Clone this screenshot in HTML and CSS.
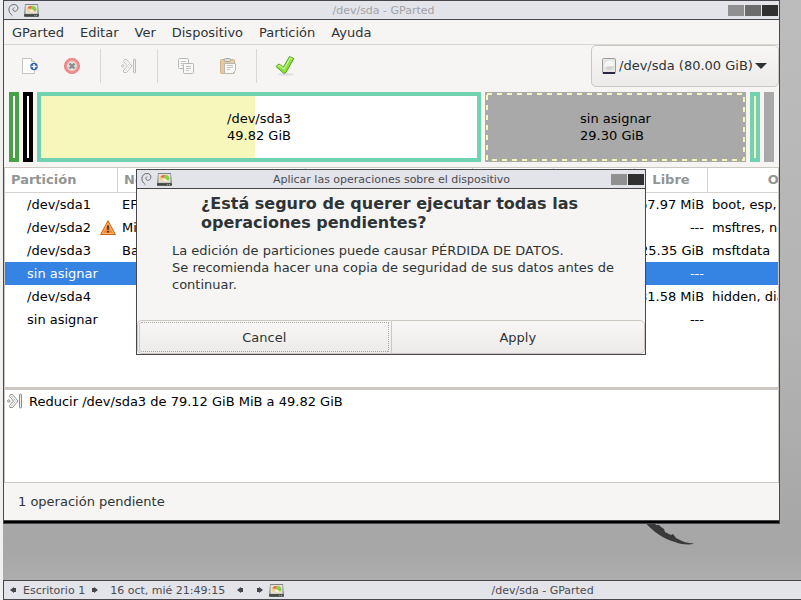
FILE: index.html
```html
<!DOCTYPE html>
<html lang="es">
<head>
<meta charset="utf-8">
<title>/dev/sda - GParted</title>
<link rel="stylesheet" href="styles.css">
</head>
<body>
<svg class="defs" aria-hidden="true">
  <defs>
    <symbol id="swirl" viewBox="0 0 12 14">
      <path d="M4.500 13C2 11 .8 8.500 1 6C1.300 3 3.500 1 6.500 1C9.500 1 11 3 10.800 5C10.600 7.500 8.500 8.800 6.800 8.300C5 7.700 4.800 5.500 6.300 4.500" fill="none" stroke="#606266" stroke-width="1" stroke-linecap="round"/>
    </symbol>
    <symbol id="gparted" viewBox="0 0 16 14">
      <path d="M1 0H15L16 13L15 14H1L0 13Z" fill="#7c7f79"/>
      <rect x="1.500" y="1" width="13" height="9.500" fill="#e2e3de"/>
      <ellipse cx="8" cy="5.800" rx="5.300" ry="3.500" fill="#f3d291"/>
      <path d="M7.500 5.500L3.500 4.500C4.500 2.500 6.500 2 8.500 2.300Z" fill="#ee6b43"/>
      <path d="M7.500 5.500L8.500 2.300C12 2 13.500 4 13.300 6.500L12 8Z" fill="#84cf45"/>
      <path d="M6 6.500L9 5.800L11 8.500L7 9Z" fill="#f8efe4"/>
      <rect x="0" y="11" width="16" height="2.500" fill="#444742"/>
      <rect x="11" y="12" width="1" height="1" fill="#b5c9a8"/>
      <rect x="13" y="12" width="1" height="1" fill="#ccd0c8"/>
    </symbol>
    <symbol id="resize" viewBox="0 0 16 16">
      <path d="M3.500 1.500H5.500L11 8L5.500 14.500H3L2.500 12.500L6.500 8L2.500 3.500Z" fill="#fff" stroke="currentColor"/>
      <path d="M4.500 3L8.700 8L4.500 13" fill="none" stroke="currentColor" stroke-dasharray="1 1"/>
      <circle cx="1.800" cy="8" r="1.200" fill="#fff" stroke="currentColor"/>
      <rect x="12.500" y="1" width="2" height="14" rx="1" fill="#eee" stroke="currentColor"/>
    </symbol>
  </defs>
</svg>

<main class="desktop">
  <svg class="wallpaper-stroke" viewBox="0 0 52 26" aria-hidden="true">
    <path d="M0 0H9L12 4L15 4L17 6L20 8L21 11L27 14L29 13L32 17L38 20C42 22 46 22 50 22.500C46 24 39 24 31 21C20 18 9 11 0 0Z" fill="#393939"/>
  </svg>

  <section class="window" aria-label="GParted">
    <header class="titlebar inactive">
      <svg class="swirl"><use href="#swirl"/></svg>
      <svg class="app-icon"><use href="#gparted"/></svg>
      <span class="title">/dev/sda - GParted</span>
      <button class="win-btn light" aria-label="Minimizar"></button>
      <button class="win-btn mid" aria-label="Maximizar"></button>
      <button class="win-btn dark" aria-label="Cerrar"></button>
    </header>

    <nav class="menubar">
      <button>GParted</button>
      <button>Editar</button>
      <button>Ver</button>
      <button>Dispositivo</button>
      <button>Partición</button>
      <button>Ayuda</button>
    </nav>

    <div class="toolbar">
      <button class="tool" aria-label="Nueva">
        <svg class="icon" viewBox="0 0 16 16">
          <path d="M.5 .5H9.500L12.500 3.500V15.500H.5Z" fill="#fdfdfd" stroke="#c4c4c2"/>
          <path d="M9.500 .5V3.500H12.500" fill="#eee" stroke="#c4c4c2"/>
          <circle cx="12" cy="8.500" r="3.700" fill="#2e5fa5"/>
          <path d="M12 6V11M9.500 8.500H14.500" stroke="#fff" stroke-width="1.500"/>
        </svg>
      </button>
      <button class="tool" aria-label="Borrar">
        <svg class="icon" viewBox="0 0 16 16">
          <circle cx="8" cy="8" r="6.400" fill="#e2e1e0" stroke="#ef8f8f" stroke-width="3"/>
          <circle cx="8" cy="8" r="7.600" fill="none" stroke="#e87f7f" stroke-width=".7"/>
          <path d="M5.500 5.500L10.500 10.500M10.500 5.500L5.500 10.500" stroke="#8b8d8c" stroke-width="2.400"/>
        </svg>
      </button>
      <span class="sep"></span>
      <button class="tool faded" aria-label="Redimensionar/Mover">
        <svg class="icon"><use href="#resize"/></svg>
      </button>
      <span class="sep"></span>
      <button class="tool" aria-label="Copiar">
        <svg class="icon" viewBox="0 0 16 16">
          <rect x=".5" y=".5" width="10" height="10" rx="1" fill="#f8f8f7" stroke="#b7b8b6"/>
          <path d="M3 3.500H8M3 5.500H8M3 7.500H6" stroke="#c4c5c3"/>
          <rect x="5.500" y="5.500" width="10" height="10" rx="1" fill="#f8f8f7" stroke="#b7b8b6"/>
          <path d="M8 8.500H13M8 10.500H13M8 12.500H11" stroke="#c4c5c3"/>
        </svg>
      </button>
      <button class="tool" aria-label="Pegar">
        <svg class="icon" viewBox="0 0 16 16">
          <rect x=".5" y="1.500" width="14" height="14" rx="1" fill="#e5c9a0" stroke="#d0b386"/>
          <rect x="4.500" y=".5" width="6" height="3" rx="1" fill="#dededc" stroke="#a8a9a7"/>
          <path d="M4.500 5.500H15.500V12.500L12.500 15.500H4.500Z" fill="#f8f8f7" stroke="#b7b8b6"/>
          <path d="M7 7.500H13M7 9.500H13M7 11.500H10" stroke="#c4c5c3"/>
        </svg>
      </button>
      <span class="sep"></span>
      <button class="tool" aria-label="Aplicar">
        <svg class="icon large" viewBox="0 0 24 24">
          <ellipse cx="13" cy="20.500" rx="8" ry="1.400" fill="#e2e1df"/>
          <path d="M3 12.500L6 10L10.500 13L16.500 2.500L20.800 4.500L13 18.500L11 19.500Z" fill="#8ae234" stroke="#5a9e26" stroke-linejoin="round"/>
          <path d="M5 12.500L6.500 11.500L11 15L17.200 4L19.200 5" fill="none" stroke="#c9f59d" stroke-width="1.200"/>
        </svg>
      </button>
      <div class="device">
        <svg class="disk" viewBox="0 0 14 16" aria-hidden="true">
          <rect x=".5" y=".5" width="13" height="15" rx="1" fill="#e6e6e3" stroke="#9b9d99"/>
          <ellipse cx="7" cy="7" rx="5" ry="5" fill="#d3d4d0"/>
          <path d="M2 7C3 2 9 1 12 4V8C9 9 6 7 3 10Z" fill="#f6f6f4"/>
          <rect x="1" y="14" width="12" height="2" fill="#25283f"/>
        </svg>
        <select aria-label="Dispositivo"><option>/dev/sda (80.00 GiB)</option></select>
        <svg class="arrow" viewBox="0 0 12 6" aria-hidden="true"><path d="M0 0H12L6 6Z" fill="#2e3436"/></svg>
      </div>
    </div>

    <div class="map">
      <div class="part tiny green"></div>
      <div class="part tiny black"></div>
      <div class="part main-part"><p>/dev/sda3<br>49.82 GiB</p></div>
      <div class="part free">
        <svg class="dashes" aria-hidden="true"><rect x="2" y="2"/></svg>
        <p>sin asignar<br>29.30 GiB</p>
      </div>
      <div class="part tiny teal"></div>
      <div class="part tiny grey"></div>
    </div>

    <div class="list">
      <table>
        <colgroup><col class="c-part"><col class="c-name"><col class="c-fs"><col class="c-size"><col class="c-size"><col class="c-free"><col class="c-flags"></colgroup>
        <thead>
          <tr><th class="left">Partición</th><th class="left">Nombre</th><th></th><th></th><th></th><th>Libre</th><th>Opciones</th></tr>
        </thead>
        <tbody>
          <tr><td>/dev/sda1</td><td>EFI</td><td></td><td></td><td></td><td class="num">67.97 MiB</td><td>boot, esp, hidden</td></tr>
          <tr><td><span class="warned">/dev/sda2
            <svg class="warn" viewBox="0 0 16 16" role="img" aria-label="Aviso">
              <path d="M8 .8L15.400 14.500H.6Z" fill="#f58a2b" stroke="#ce6412" stroke-linejoin="round"/>
              <path d="M8 3L13.600 13.500H2.400Z" fill="none" stroke="#fcb677"/>
              <path d="M7 5.500H9L8.700 10H7.300Z" fill="#353535"/><rect x="7" y="11" width="2" height="1.500" fill="#353535"/>
            </svg></span></td><td>Mic</td><td></td><td></td><td></td><td class="num">---</td><td>msftres, no_automount</td></tr>
          <tr><td>/dev/sda3</td><td>Bas</td><td></td><td></td><td></td><td class="num">25.35 GiB</td><td>msftdata</td></tr>
          <tr class="selected"><td>sin asignar</td><td></td><td></td><td></td><td></td><td class="num">---</td><td></td></tr>
          <tr><td>/dev/sda4</td><td></td><td></td><td></td><td></td><td class="num">81.58 MiB</td><td>hidden, diag</td></tr>
          <tr><td>sin asignar</td><td></td><td></td><td></td><td></td><td class="num">---</td><td></td></tr>
        </tbody>
      </table>
    </div>

    <div class="operations">
      <svg class="icon op-icon" aria-hidden="true"><use href="#resize"/></svg>
      <span>Reducir /dev/sda3 de 79.12 GiB MiB a 49.82 GiB</span>
    </div>

    <footer class="status">1 operación pendiente</footer>
    <div class="handle"></div>
  </section>
</main>

<footer class="taskbar">
  <button class="nav" aria-label="Escritorio anterior"><svg viewBox="0 0 7 6"><path d="M0 3L4 0V1H6V5H4V6Z"/></svg></button>
  <span>Escritorio 1</span>
  <button class="nav" aria-label="Escritorio siguiente"><svg viewBox="0 0 7 6"><path d="M7 3L3 0V1H1V5H3V6Z"/></svg></button>
  <time>16 oct, mié 21:49:15</time>
  <button class="nav" aria-label="Ventana anterior"><svg viewBox="0 0 7 6"><path d="M0 3L4 0V1H6V5H4V6Z"/></svg></button>
  <button class="nav" aria-label="Ventana siguiente"><svg viewBox="0 0 7 6"><path d="M7 3L3 0V1H1V5H3V6Z"/></svg></button>
  <svg class="app-icon"><use href="#gparted"/></svg>
  <span class="task">/dev/sda - GParted</span>
</footer>

<section class="dialog" role="dialog" aria-labelledby="question">
  <header class="titlebar">
    <svg class="swirl"><use href="#swirl"/></svg>
    <svg class="app-icon"><use href="#gparted"/></svg>
    <span class="title">Aplicar las operaciones sobre el dispositivo</span>
    <button class="win-btn light" aria-label="Minimizar"></button>
    <button class="win-btn dark" aria-label="Cerrar"></button>
  </header>
  <div class="message">
    <h1 id="question">¿Está seguro de querer ejecutar todas las operaciones pendientes?</h1>
    <p>La edición de particiones puede causar PÉRDIDA DE DATOS.<br>Se recomienda hacer una copia de seguridad de sus datos antes de continuar.</p>
  </div>
  <div class="actions">
    <button class="focused">Cancel</button>
    <button>Apply</button>
  </div>
</section>
</body>
</html>
```
FILE: styles.css
```css
* { box-sizing: border-box; }

body {
  margin: 0;
  padding-left: 3px;
  min-height: 100vh;
  display: flex;
  flex-direction: column;
  background: #f0f0f0;
  color: #2e3436;
  font: 13px/17px "DejaVu Sans", sans-serif;
  overflow: hidden;
}

button, select {
  font: inherit;
  color: inherit;
  border: 0;
  margin: 0;
  padding: 0;
  background: none;
}

p, h1 { margin: 0; }
svg { display: block; flex: none; }
.defs { position: absolute; width: 0; height: 0; }

.desktop {
  flex: 1;
  display: flex;
  position: relative;
  padding: 0 21px 56px 0;
  background: linear-gradient(#bcbcbc, #b4b4b4 55%, #a6a6a6 94%, #adadad);
}

.wallpaper-stroke {
  position: absolute;
  right: 105px;
  bottom: 33px;
  width: 52px;
  height: 26px;
}

.window {
  position: relative;
  flex: 1;
  min-width: 0;
  display: flex;
  flex-direction: column;
  border: 1px solid #48464a;
  background: #f6f5f4;
}

/* Title bars */
.titlebar {
  display: flex;
  align-items: center;
  gap: 1px;
  height: 19px;
  padding: 0 1px 0 4px;
  background: #e3e3ea;
  border-bottom: 1px solid #48464a;
  color: #4b4c50;
  font-size: 11px;
}
.inactive { color: #a2a2a5; }
.title { flex: 1; text-align: center; }
.swirl { width: 11px; height: 14px; margin-right: 4px; }
.app-icon { width: 15px; height: 13px; }
.win-btn { width: 16px; height: 11px; }
.light { background: #909090; }
.mid { background: #6c6c6c; }
.dark { background: #303030; }

.menubar {
  display: flex;
  height: 25px;
  border-bottom: 1px solid #d9d6d3;
}
.menubar button { padding: 0 8px; }

/* Toolbar */
.toolbar {
  display: flex;
  align-items: center;
  height: 42px;
  padding-left: 5px;
}
.tool {
  display: flex;
  align-items: center;
  justify-content: center;
  width: 42px;
  height: 42px;
}
.icon { width: 16px; height: 16px; }
.large { width: 24px; height: 24px; }
.faded { color: #bbbcba; }
.sep {
  width: 1px;
  height: 34px;
  margin: 0 7px;
  background: #d9d7d5;
}
.device {
  position: relative;
  margin-left: auto;
}
.device select {
  appearance: none;
  width: 188px;
  height: 42px;
  padding: 0 24px 2px 27px;
  border: 1px solid #cdc7c2;
  border-radius: 5px;
  background: linear-gradient(#f8f7f6, #edebe9);
}
.disk { position: absolute; left: 11px; top: 13px; width: 14px; height: 16px; }
.arrow { position: absolute; right: 12px; top: 18px; width: 12px; height: 6px; }

/* Disk map */
.map {
  display: flex;
  gap: 4px;
  padding: 5px;
  color: #000;
}
.part {
  position: relative;
  display: flex;
  align-items: center;
  justify-content: center;
  height: 70px;
}
.tiny { flex: none; width: 10px; border: 4px solid; background: #f7f7bb; }
.green { border-color: #48a147; background: #fff; }
.black { border-color: #000; background: #fff; }
.teal { border-color: #70d2b1; }
.grey { border-color: #a9a9a9; background: #a9a9a9; }
.main-part {
  flex: 436 0 0;
  border: 4px solid #70d2b1;
  background: linear-gradient(90deg, #f7f7bb 49%, #fff 49%);
}
.free { flex: 261 0 0; background: #a9a9a9; }
.dashes { position: absolute; inset: 0; width: 100%; height: 100%; }
.dashes rect {
  width: calc(100% - 4px);
  height: calc(100% - 4px);
  fill: none;
  stroke: #f7f7bb;
  stroke-width: 2px;
  stroke-dasharray: 5px;
}
.free p { position: relative; }

/* Partition list */
.list {
  flex: 219 0 0;
  min-height: 0;
  overflow: hidden;
  border: 1px solid #cdc7c2;
  border-bottom: 0;
  background: #fff;
  color: #000;
}
table { width: 891px; table-layout: fixed; border-collapse: separate; border-spacing: 0; }
.c-part { width: 113px; }
.c-name { width: 188px; }
.c-fs { width: 167px; }
.c-size { width: 81px; }
.c-free { width: 73px; }
.c-flags { width: 188px; }
th {
  height: 25px;
  padding: 0 6px 2px;
  border-right: 1px solid #d5d3d1;
  border-bottom: 1px solid #d5d3d1;
  color: #929595;
}
.left { text-align: left; }
td { height: 23px; padding: 0 4px; white-space: nowrap; }
td:first-child { padding-left: 22px; }
.num { text-align: right; }
.selected { background: #3584e4; color: #fff; }
.warned { display: flex; align-items: center; gap: 9px; }
.warn { width: 16px; height: 16px; }

/* Pending operations */
.operations {
  flex: 86 0 0;
  display: flex;
  align-items: flex-start;
  gap: 6px;
  padding: 3px 2px;
  border: 1px solid #cdc7c2;
  border-top-width: 3px;
  background: #fff;
  color: #000;
}
.op-icon { color: #8b8d8a; }

.status { padding: 10px 14px; }
.handle { height: 3px; background: #000; border-top: 1px solid #48464a; }

/* Taskbar */
.taskbar {
  display: flex;
  align-items: center;
  height: 20px;
  background: #e3e3ea;
  border: 1px solid #48464a;
  border-right: 0;
  color: #4b4c50;
  font-size: 11px;
}
.nav { width: 19px; height: 18px; padding: 0 6px; }
.nav svg { width: 7px; height: 6px; fill: #45464a; }
.taskbar time { margin: 0 6px; }
.task { flex: 1; text-align: center; }

/* Confirmation dialog */
.dialog {
  position: absolute;
  left: 136px;
  top: 169px;
  width: 510px;
  border: 1px solid #48464a;
  background: #f6f5f4;
}
.message { padding: 5px 26px 27px 35px; }
h1 { padding-left: 29px; font-size: 16px; line-height: 19px; }
.message p { padding-top: 10px; }
.actions { display: flex; }
.actions button {
  flex: 1;
  height: 34px;
  border: 1px solid #cdc7c2;
  border-radius: 0 5px 5px 0;
  background: linear-gradient(#f8f7f6, #edebe9);
}
.actions .focused {
  border-radius: 5px 0 0 5px;
  border-right: 0;
  outline: 1px dotted #a5a5a3;
  outline-offset: -3px;
}
```
